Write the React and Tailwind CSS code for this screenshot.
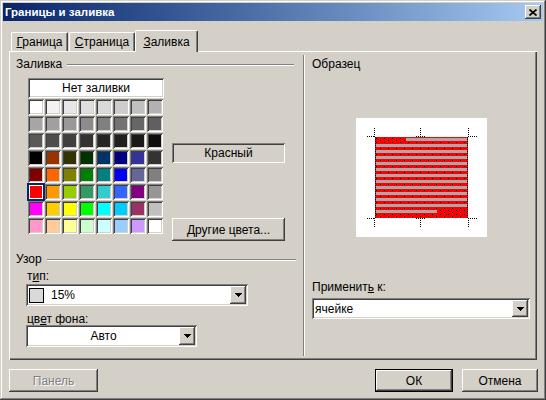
import React from "react";

const sunken =
  "shadow-[inset_1px_1px_0_#808080,inset_-1px_-1px_0_#ffffff,inset_2px_2px_0_#404040,inset_-2px_-2px_0_#d4d0c8]";
const raised =
  "shadow-[inset_-1px_-1px_0_#404040,inset_1px_1px_0_#ffffff,inset_-2px_-2px_0_#808080,inset_2px_2px_0_#d4d0c8]";

const palette = [
  ["#ffffff", "#f2f2f2", "#e6e6e6", "#dfdfdf", "#d9d9d9", "#cccccc", "#c0c0c0", "#b2b2b2"],
  ["#a6a6a6", "#a0a0a0", "#999999", "#8c8c8c", "#808080", "#737373", "#666666", "#606060"],
  ["#595959", "#4d4d4d", "#404040", "#333333", "#262626", "#202020", "#1a1a1a", "#0d0d0d"],
  ["#000000", "#993300", "#333300", "#003300", "#003366", "#000080", "#333399", "#333333"],
  ["#800000", "#ff6600", "#808000", "#008000", "#008080", "#0000ff", "#666699", "#808080"],
  ["#ff0000", "#ff9900", "#99cc00", "#339966", "#33cccc", "#3366ff", "#800080", "#969696"],
  ["#ff00ff", "#ffcc00", "#ffff00", "#00ff00", "#00ffff", "#00ccff", "#993366", "#c0c0c0"],
  ["#ff99cc", "#ffcc99", "#ffff99", "#ccffcc", "#ccffff", "#99ccff", "#cc99ff", "#ffffff"],
];

function Arrow() {
  return (
    <svg width="7" height="4" viewBox="0 0 7 4" shapeRendering="crispEdges">
      <rect x="0" y="0" width="7" height="1" fill="#000" />
      <rect x="1" y="1" width="5" height="1" fill="#000" />
      <rect x="2" y="2" width="3" height="1" fill="#000" />
      <rect x="3" y="3" width="1" height="1" fill="#000" />
    </svg>
  );
}

function Combo({ width, height = "h-[22px]", children }) {
  return (
    <div className={`${width} ${height} ${sunken} bg-white flex p-[2px]`}>
      <div className="flex-1 flex items-center min-w-0">{children}</div>
      <div className={`w-[16px] ${raised} bg-[#d4d0c8] flex items-center justify-center`}>
        <Arrow />
      </div>
    </div>
  );
}

function GroupHeader({ label, lineClass }) {
  return (
    <div className="flex items-center h-[13px] pl-[7px]">
      <span className="leading-[13px]">{label}</span>
      <div className={`${lineClass} h-[2px] border-t border-t-[#808080] border-b border-b-white`} />
    </div>
  );
}

function Tab({ children, width, active }) {
  return (
    <div
      className={`${width} flex items-center justify-center border-t border-l border-white rounded-tl-[2px] rounded-tr-[2px] bg-[#d4d0c8] shadow-[inset_-1px_0_0_#808080] border-r border-r-[#404040] ${
        active ? "h-[22px] -mb-px relative z-10" : "h-[19px]"
      }`}
    >
      {children}
    </div>
  );
}

function Preview() {
  const stripes = [];
  for (let i = 0; i < 13; i++) {
    const y = 20 + i * 6;
    const x1 = i === 0 ? 50 : 20;
    const x2 = i === 12 ? 81 : 111;
    stripes.push(<rect key={i} x={x1} y={y} width={x2 - x1} height="3" fill="#a9a9a9" />);
  }
  const dot = { stroke: "#000", strokeWidth: 1, strokeDasharray: "1 1" };
  return (
    <svg width="131" height="119" viewBox="0 0 131 119" shapeRendering="crispEdges">
      <defs>
        <pattern id="dots" x="19" y="19" width="8" height="4" patternUnits="userSpaceOnUse">
          <rect x="1" y="1" width="1" height="1" fill="#000" />
          <rect x="5" y="3" width="1" height="1" fill="#000" />
        </pattern>
      </defs>
      <rect x="0" y="0" width="131" height="119" fill="#fff" />
      <rect x="19" y="19" width="93" height="81" fill="#ff0000" />
      <rect x="19" y="19" width="93" height="81" fill="url(#dots)" />
      {stripes}
      <line x1="19.5" y1="19" x2="19.5" y2="100" {...dot} />
      <line x1="111.5" y1="19" x2="111.5" y2="100" {...dot} />
      {/* corner marks top */}
      <line x1="18.5" y1="10" x2="18.5" y2="19" {...dot} />
      <line x1="11" y1="18.5" x2="19" y2="18.5" {...dot} />
      <line x1="64.5" y1="10" x2="64.5" y2="19" {...dot} />
      <line x1="60" y1="18.5" x2="69" y2="18.5" {...dot} />
      <line x1="112.5" y1="10" x2="112.5" y2="19" {...dot} />
      <line x1="112" y1="18.5" x2="121" y2="18.5" {...dot} />
      {/* corner marks bottom */}
      <line x1="18.5" y1="100" x2="18.5" y2="110" {...dot} />
      <line x1="11" y1="100.5" x2="19" y2="100.5" {...dot} />
      <line x1="64.5" y1="100" x2="64.5" y2="110" {...dot} />
      <line x1="60" y1="100.5" x2="69" y2="100.5" {...dot} />
      <line x1="112.5" y1="100" x2="112.5" y2="110" {...dot} />
      <line x1="112" y1="100.5" x2="121" y2="100.5" {...dot} />
    </svg>
  );
}

export default function App() {
  return (
    <div className="w-[546px] h-[400px] bg-[#d4d0c8] p-[3px] flex flex-col font-['Liberation_Sans',Arial,sans-serif] text-[12px] text-black shadow-[inset_-1px_-1px_0_#404040,inset_1px_1px_0_#d4d0c8,inset_-2px_-2px_0_#808080,inset_2px_2px_0_#ffffff]">
      {/* title bar */}
      <div className="h-[18px] flex items-center justify-between bg-linear-to-r from-[#0a246a] to-[#a6caf0] pl-[2px] pr-[2px]">
        <span className="text-white font-bold text-[11.5px] leading-[13px]">Границы и заливка</span>
        <div className={`w-[16px] h-[14px] ${raised} bg-[#d4d0c8] flex items-center justify-center`}>
          <svg width="8" height="7" viewBox="0 0 8 7">
            <path d="M0.5 0.5 L7.5 6.5 M7.5 0.5 L0.5 6.5" stroke="#000" strokeWidth="1.7" />
          </svg>
        </div>
      </div>

      {/* tabs */}
      <div className="mt-[9px] h-[21px] flex items-end ml-[8px]">
        <Tab width="w-[57px]">
          <span>
            <span className="underline">Г</span>раница
          </span>
        </Tab>
        <div className="w-[1px]" />
        <Tab width="w-[66px]">
          <span>
            <span className="underline">С</span>траница
          </span>
        </Tab>
        <Tab width="w-[63px]" active>
          <span>
            <span className="underline">З</span>аливка
          </span>
        </Tab>
      </div>

      {/* panel */}
      <div className="ml-[6px] w-[528px] h-[309px] flex shadow-[inset_1px_1px_0_#ffffff,inset_-1px_-1px_0_#404040,inset_-2px_-2px_0_#808080]">
        {/* left */}
        <div className="w-[294px] flex flex-col">
          <div className="mt-[7px]">
            <GroupHeader label="Заливка" lineClass="flex-1 ml-[5px] mr-[9px]" />
          </div>
          <div className="mt-[7px] pl-[19px] flex">
            <div className="flex flex-col">
              <div className={`w-[136px] h-[20px] ${sunken} bg-white flex items-center justify-center`}>
                Нет заливки
              </div>
              <div className="mt-[1px] grid grid-cols-8 gap-[1px] w-[135px]">
                {palette.flat().map((c, i) => (
                  <div
                    key={i}
                    className={
                      i === 40
                        ? "w-[16px] h-[16px] outline-1 outline-solid outline-[#0a246a] shadow-[inset_0_0_0_1px_#0a246a,inset_0_0_0_2px_#ffffff]"
                        : `w-[16px] h-[16px] ${sunken}`
                    }
                    style={{ backgroundColor: c }}
                  />
                ))}
              </div>
            </div>
            <div className="ml-[8px] flex flex-col">
              <div className={`mt-[65px] w-[113px] h-[20px] ${sunken} flex items-center justify-center`}>
                Красный
              </div>
              <div className={`mt-[55px] w-[113px] h-[23px] ${raised} flex items-center justify-center`}>
                <span>
                  <span className="underline">Д</span>ругие цвета...
                </span>
              </div>
            </div>
          </div>
          <div className="mt-[12px]">
            <GroupHeader label="Узор" lineClass="flex-1 ml-[5px] mr-[7px]" />
          </div>
          <div className="mt-[4px] pl-[18px] h-[12px] leading-[12px]">
            т<span className="underline">и</span>п:
          </div>
          <div className="mt-[2px] pl-[17px]">
            <Combo width="w-[222px]">
              <div className="ml-[1px] w-[15px] h-[15px] border border-black bg-[#d9d9d9]" />
              <span className="ml-[7px]">15%</span>
            </Combo>
          </div>
          <div className="mt-[7px] pl-[18px] h-[12px] leading-[12px]">
            цв<span className="underline">е</span>т фона:
          </div>
          <div className="pl-[17px]">
            <Combo width="w-[171px]">
              <span className="flex-1 text-center">Авто</span>
            </Combo>
          </div>
        </div>

        {/* separator */}
        <div className="my-[4px] w-[2px] border-l border-l-[#808080] border-r border-r-white" />

        {/* right */}
        <div className="flex-1 flex flex-col">
          <div className="mt-[7px] pl-[7px] leading-[13px]">Образец</div>
          <div className="mt-[47px] ml-[51px]">
            <Preview />
          </div>
          <div className="mt-[44px] pl-[7px] leading-[13px]">
            Применит<span className="underline">ь</span> к:
          </div>
          <div className="mt-[4px] pl-[7px]">
            <Combo width="w-[218px]" height="h-[21px]">
              <span className="ml-[1px]">ячейке</span>
            </Combo>
          </div>
        </div>
      </div>

      {/* buttons */}
      <div className="mt-[9px] flex ml-[6px] mr-[5px]">
        <div className={`w-[89px] h-[23px] ${raised} flex items-center justify-center text-[#808080] [text-shadow:1px_1px_0_#ffffff]`}>
          Панель
        </div>
        <div className="ml-auto w-[78px] h-[23px] border border-black flex">
          <div className={`flex-1 ${raised} flex items-center justify-center`}>ОК</div>
        </div>
        <div className={`ml-[9px] w-[76px] h-[23px] ${raised} flex items-center justify-center`}>Отмена</div>
      </div>
    </div>
  );
}
